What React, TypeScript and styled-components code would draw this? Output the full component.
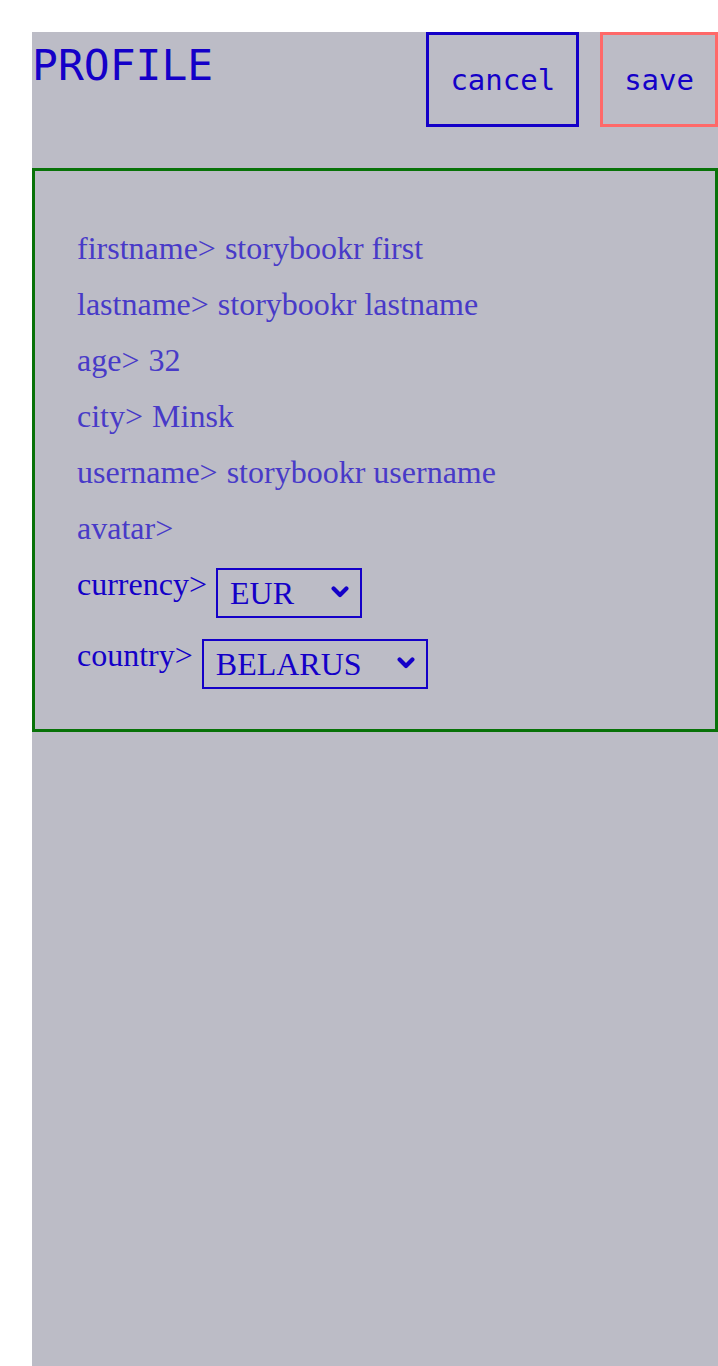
import React from "react";
import styled, { createGlobalStyle } from "styled-components";

const GlobalStyle = createGlobalStyle`
  html, body { margin: 0; padding: 0; background: #ffffff; }
  body { font-family: "Liberation Serif", "Times New Roman", serif; }
  * { box-sizing: border-box; }
`;

const Page = styled.div`
  padding: 32px 0 0 32px;
  min-height: 100vh;
`;

const Panel = styled.main`
  background: rgb(188, 188, 198);
  min-height: calc(100vh - 32px);
  display: flex;
  flex-direction: column;
`;

const Header = styled.header`
  display: flex;
  align-items: flex-start;
  justify-content: space-between;
  margin-bottom: 41px;
`;

const Title = styled.h1`
  margin: 8px 0 0 0;
  font-family: "DejaVu Sans Mono", monospace;
  font-weight: 400;
  font-size: 43px;
  line-height: 1.164;
  color: #1400c8;
`;

const Actions = styled.div`
  display: flex;
  gap: 21px;
`;

const Button = styled.button<{ $tone: "primary" | "danger" }>`
  height: 95px;
  padding: 0 21px;
  background: transparent;
  border: 3px solid ${(p) => (p.$tone === "danger" ? "#ff6969" : "#1400c8")};
  font-family: "DejaVu Sans Mono", monospace;
  font-size: 29px;
  color: #1400c8;
  cursor: pointer;
`;

const Card = styled.section`
  border: 3px solid #087208;
  padding: 59px 40px 40px 42px;
  display: flex;
  flex-direction: column;
  gap: 19px;
`;

const Row = styled.div<{ $readonly?: boolean }>`
  display: flex;
  align-items: flex-start;
  gap: 9px;
  font-size: 32px;
  color: ${(p) => (p.$readonly ? "rgb(72, 58, 200)" : "#1400c8")};
`;

const Label = styled.span`
  white-space: nowrap;
`;

const Value = styled.span`
  white-space: nowrap;
`;

const SelectWrap = styled.div`
  position: relative;
  margin-top: 2px;
`;

const Select = styled.select<{ $w: number }>`
  appearance: none;
  -webkit-appearance: none;
  width: ${(p) => p.$w}px;
  height: 50px;
  padding: 0 0 0 12px;
  border: 2px solid #1400c8;
  border-radius: 0;
  background: transparent;
  font-family: "Liberation Serif", "Times New Roman", serif;
  font-size: 32px;
  color: #1400c8;
`;

const Chevron = styled.svg`
  position: absolute;
  right: 13px;
  top: 18px;
  width: 18px;
  height: 12px;
  pointer-events: none;
`;

const ChevronIcon = () => (
  <Chevron viewBox="0 0 18 12">
    <path d="M2.6 2.6 L9 9 L15.4 2.6" fill="none" stroke="#1400c8" strokeWidth="4.2" strokeLinecap="round" strokeLinejoin="round" />
  </Chevron>
);

const fields: [string, string][] = [
  ["firstname", "storybookr first"],
  ["lastname", "storybookr lastname"],
  ["age", "32"],
  ["city", "Minsk"],
  ["username", "storybookr username"],
  ["avatar", ""],
];

export default function App() {
  return (
    <>
      <GlobalStyle />
      <Page>
        <Panel>
          <Header>
            <Title>PROFILE</Title>
            <Actions>
              <Button $tone="primary">cancel</Button>
              <Button $tone="danger">save</Button>
            </Actions>
          </Header>
          <Card>
            {fields.map(([k, v]) => (
              <Row $readonly key={k}>
                <Label>{k}&gt;</Label>
                {v && <Value>{v}</Value>}
              </Row>
            ))}
            <Row>
              <Label>currency&gt;</Label>
              <SelectWrap>
                <Select $w={146} defaultValue="EUR">
                  <option value="EUR">EUR</option>
                  <option value="USD">USD</option>
                  <option value="RUB">RUB</option>
                </Select>
                <ChevronIcon />
              </SelectWrap>
            </Row>
            <Row>
              <Label>country&gt;</Label>
              <SelectWrap>
                <Select $w={226} defaultValue="BELARUS">
                  <option value="BELARUS">BELARUS</option>
                  <option value="RUSSIA">RUSSIA</option>
                  <option value="UKRAINE">UKRAINE</option>
                </Select>
                <ChevronIcon />
              </SelectWrap>
            </Row>
          </Card>
        </Panel>
      </Page>
    </>
  );
}
